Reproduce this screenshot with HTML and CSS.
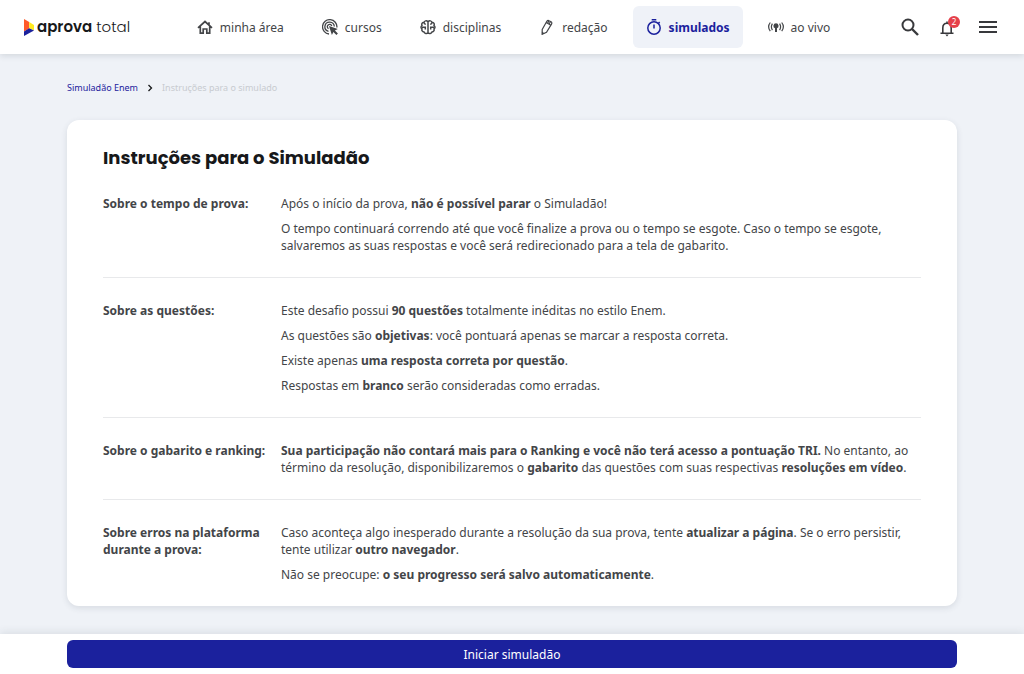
FILE: index.html
```
<!DOCTYPE html>
<html lang="pt-BR">
<head>
<meta charset="utf-8">
<meta name="viewport" content="width=device-width, initial-scale=1">
<title>Instruções para o Simuladão</title>
<link rel="stylesheet" href="styles.css">
</head>
<body>
<header class="topbar">
  <a class="logo" href="#">
    <svg class="logo-mark" viewBox="0 0 10 17" aria-hidden="true">
      <path fill="#ff5a2b" d="M0 0 5.200 3v6.500L0 12.500z"/>
      <path fill="#ffea1f" d="M5.200 3 10 6v5.500L5.200 9z"/>
      <path fill="#1b219d" d="M0 17v-4.500L5.200 9.200 10 11.600z"/>
    </svg>
    <span class="logo-text"><b>aprova</b> total</span>
  </a>
  <nav class="nav" aria-label="Principal">
    <a class="nav-item" href="#">
      <svg class="icon" viewBox="0 0 16 16" aria-hidden="true"><path d="M1 8.800 8 2.500l7 6.300M3.300 7.500v6.700h2.900V10h3.600v4.200h2.900V7.500M12 5.500V3.200" stroke-width="1.700"/></svg>
      minha área
    </a>
    <a class="nav-item" href="#">
      <svg class="icon" viewBox="0 0 16 16" aria-hidden="true"><path d="M14.900 8.500A7.200 7.200 0 1 0 7 15M12.300 7.500A4.700 4.700 0 1 0 6.500 12.300M9.800 7A2.300 2.300 0 1 0 6.500 9.700" stroke-width="1.300"/><path class="solid" d="m7 7 8.800 3-2.900 1.600 3 3-1.500 1.400-3-3L9.900 16z"/></svg>
      cursos
    </a>
    <a class="nav-item" href="#">
      <svg class="icon" viewBox="0 0 16 16" aria-hidden="true"><path d="M8 2.700C6.500 1.200 4.500 1.800 4 3.300 2 3.500 1.300 5 2 6.500.7 7.400.7 8.900 2 9.900c-.6 1.600.3 2.800 2 3 .6 1.700 2.800 2.100 4 .8 1.200 1.300 3.400.9 4-.8 1.700-.2 2.600-1.400 2-3 1.300-1 1.300-2.500 0-3.400.7-1.500 0-3-2-3.200C11.500 1.800 9.500 1.200 8 2.700zM8 2.700v11M4 3.300c0 1.200.7 1.900 1.800 2M12 3.300c0 1.200-.7 1.900-1.800 2M2 8.200h3.300v2.300M14 8.200h-3.300v2.300" stroke-width="1.500"/></svg>
      disciplinas
    </a>
    <a class="nav-item" href="#">
      <svg class="icon" viewBox="0 0 16 16" aria-hidden="true"><path d="M3.200 10.500 7.700 2.500c.6-1 1.500-1.300 2.400-.8l1.900 1c.9.500 1.100 1.500.5 2.400L7.500 13.200 3.200 15.200z M7.200 3.500l4.300 2.600M8.700 4.300l1.200-2.500M10 5.200 11.200 3" stroke-width="1.200"/><path class="solid" d="m2.900 12.500 2.600 1.700-2.600 1.500z"/></svg>
      redação
    </a>
    <a class="nav-item nav-item--active" href="#" aria-current="page">
      <svg class="icon" viewBox="0 0 16 16" aria-hidden="true"><circle cx="8" cy="9" r="6.200" stroke-width="1.500"/><path d="M5.700.8h4.600M8 5.500v4M12.500 4.300l1.200-1.200" stroke-width="1.500"/></svg>
      simulados
    </a>
    <a class="nav-item" href="#">
      <svg class="icon" viewBox="0 0 16 16" aria-hidden="true"><path d="M2.300 3.500C.3 6 .3 9.500 2.300 12.200M4.400 4.700c-1.300 2-1.300 4.300 0 6.400M13.700 3.500c2 2.500 2 6 0 8.700M11.600 4.700c1.300 2 1.300 4.300 0 6.400" stroke-width="1.200"/><path class="solid" d="M8 4.300a2.600 2.600 0 0 1 1 5V13H7V9.300a2.600 2.600 0 0 1 1-5z"/></svg>
      ao vivo
    </a>
  </nav>
  <div class="actions">
    <button class="icon-button" type="button" aria-label="Buscar">
      <svg class="icon icon--large" viewBox="0 0 18 18" aria-hidden="true"><circle cx="7" cy="7" r="5.500" stroke-width="2"/><path d="m11 11 6 6" stroke-width="2.400"/></svg>
    </button>
    <button class="icon-button" type="button" aria-label="Notificações">
      <svg class="icon icon--large" viewBox="2 -1 18 18" aria-hidden="true"><path d="M2.500 14.300h13M4.800 14.300V9c0-2.800 1.700-4.700 4.200-4.700S13.200 6.200 13.200 9v5.300M9 2.500v1.800" stroke-width="1.600"/><path class="solid" d="M7.300 15.600h3.400L9 17.600z"/></svg>
      <span class="badge">2</span>
    </button>
    <button class="icon-button" type="button" aria-label="Menu">
      <svg class="icon icon--large" viewBox="0 0 18 18" aria-hidden="true"><path d="M0 4h18M0 9h18M0 14h18" stroke-width="2"/></svg>
    </button>
  </div>
</header>

<main class="page">
  <nav class="breadcrumb" aria-label="Trilha">
    <a class="breadcrumb-link" href="#">Simuladão Enem</a>
    <svg class="chevron" viewBox="0 0 6 8" aria-hidden="true"><path d="m1.500 1 3 3-3 3"/></svg>
    <span class="breadcrumb-current">Instruções para o simulado</span>
  </nav>

  <article class="card">
    <h1 class="card-title">Instruções para o Simuladão</h1>
    <section class="topic">
      <h2 class="topic-title">Sobre o tempo de prova:</h2>
      <div class="topic-body">
        <p>Após o início da prova, <strong>não é possível parar</strong> o Simuladão!</p>
        <p>O tempo continuará correndo até que você finalize a prova ou o tempo se esgote. Caso o tempo se esgote, salvaremos as suas respostas e você será redirecionado para a tela de gabarito.</p>
      </div>
    </section>
    <section class="topic">
      <h2 class="topic-title">Sobre as questões:</h2>
      <div class="topic-body">
        <p>Este desafio possui <strong>90 questões</strong> totalmente inéditas no estilo Enem.</p>
        <p>As questões são <strong>objetivas</strong>: você pontuará apenas se marcar a resposta correta.</p>
        <p>Existe apenas <strong>uma resposta correta por questão</strong>.</p>
        <p>Respostas em <strong>branco</strong> serão consideradas como erradas.</p>
      </div>
    </section>
    <section class="topic">
      <h2 class="topic-title">Sobre o gabarito e ranking:</h2>
      <div class="topic-body">
        <p><strong>Sua participação não contará mais para o Ranking e você não terá acesso a pontuação TRI.</strong> No entanto, ao término da resolução, disponibilizaremos o <strong>gabarito</strong> das questões com suas respectivas <strong>resoluções em vídeo</strong>.</p>
      </div>
    </section>
    <section class="topic">
      <h2 class="topic-title">Sobre erros na plataforma durante a prova:</h2>
      <div class="topic-body">
        <p>Caso aconteça algo inesperado durante a resolução da sua prova, tente <strong>atualizar a página</strong>. Se o erro persistir, tente utilizar <strong>outro navegador</strong>.</p>
        <p>Não se preocupe: <strong>o seu progresso será salvo automaticamente</strong>.</p>
      </div>
    </section>
  </article>
</main>

<footer class="footer">
  <button class="start-button" type="button">Iniciar simuladão</button>
</footer>
</body>
</html>
```
FILE: styles.css
```
* {
  box-sizing: border-box;
}

body {
  margin: 0;
  min-height: 100vh;
  display: flex;
  flex-direction: column;
  background: #eff2f7;
  color: #434548;
  font: 12px/17px "Noto Sans", sans-serif;
}

a {
  color: inherit;
  text-decoration: none;
}

button {
  border: 0;
  font: inherit;
  cursor: pointer;
}

.topbar {
  display: flex;
  align-items: center;
  justify-content: space-between;
  height: 54px;
  padding: 0 27px 0 24px;
  background: #fff;
  box-shadow: 0 2px 6px rgba(40, 60, 70, 0.14);
}

.logo {
  display: flex;
  align-items: center;
  gap: 3px;
  color: #17181a;
}

.logo-mark {
  width: 10px;
  height: 17px;
}

.logo-text {
  font: 300 15px/20px Poppins, Inter, sans-serif;
  white-space: nowrap;
}

.logo-text b {
  font-weight: 600;
}

.nav {
  display: flex;
  gap: 12px;
}

.nav-item {
  display: flex;
  align-items: center;
  gap: 7px;
  height: 42px;
  padding: 0 13px;
  border-radius: 6px;
  white-space: nowrap;
}

.nav-item--active {
  background: #eff2f8;
  color: #1b219d;
  font-weight: 700;
}

.icon {
  flex: none;
  width: 16px;
  height: 16px;
  fill: none;
  stroke: currentColor;
}

.icon .solid {
  fill: currentColor;
  stroke: none;
}

.icon--large {
  display: block;
  width: 18px;
  height: 18px;
  overflow: visible;
}

.actions {
  display: flex;
  gap: 21px;
  padding-left: 4px;
}

.icon-button {
  position: relative;
  padding: 0;
  background: none;
  color: #38393c;
}

.badge {
  position: absolute;
  top: -2px;
  right: -2px;
  width: 12px;
  height: 12px;
  border-radius: 50%;
  background: #e5404a;
  color: #fff;
  font-size: 8px;
  line-height: 12px;
  text-align: center;
}

.page {
  flex: 1;
  padding: 25px 67px 28px;
}

.breadcrumb {
  display: flex;
  align-items: center;
  gap: 9px;
  margin-bottom: 24px;
  font-size: 9px;
}

.breadcrumb-link {
  color: #1b219d;
}

.breadcrumb-current {
  color: #c8cbd0;
}

.chevron {
  width: 6px;
  height: 8px;
  fill: none;
  stroke: #17181a;
  stroke-width: 1.300;
}

.card {
  padding: 24px 36px 0;
  border-radius: 12px;
  background: #fff;
  box-shadow: 0 2px 6px rgba(40, 60, 70, 0.12);
}

.card-title {
  margin: 0;
  color: #17181a;
  font: 700 18px/27px Poppins, Inter, sans-serif;
}

.topic {
  display: grid;
  grid-template-columns: 166px 1fr;
  gap: 12px;
  padding: 24px 0 23px;
}

.topic + .topic {
  border-top: 1px solid #e8e9eb;
}

.topic-title {
  margin: 0;
  font: inherit;
  font-weight: 700;
}

.topic-body {
  display: grid;
  gap: 8px;
}

.topic-body p {
  margin: 0;
}

.footer {
  position: sticky;
  bottom: 0;
  padding: 6px 67px;
  background: #fff;
  box-shadow: 0 -2px 8px rgba(40, 60, 70, 0.1);
}

.start-button {
  display: block;
  width: 100%;
  height: 28px;
  border-radius: 6px;
  background: #1b219d;
  color: #fff;
}
```
